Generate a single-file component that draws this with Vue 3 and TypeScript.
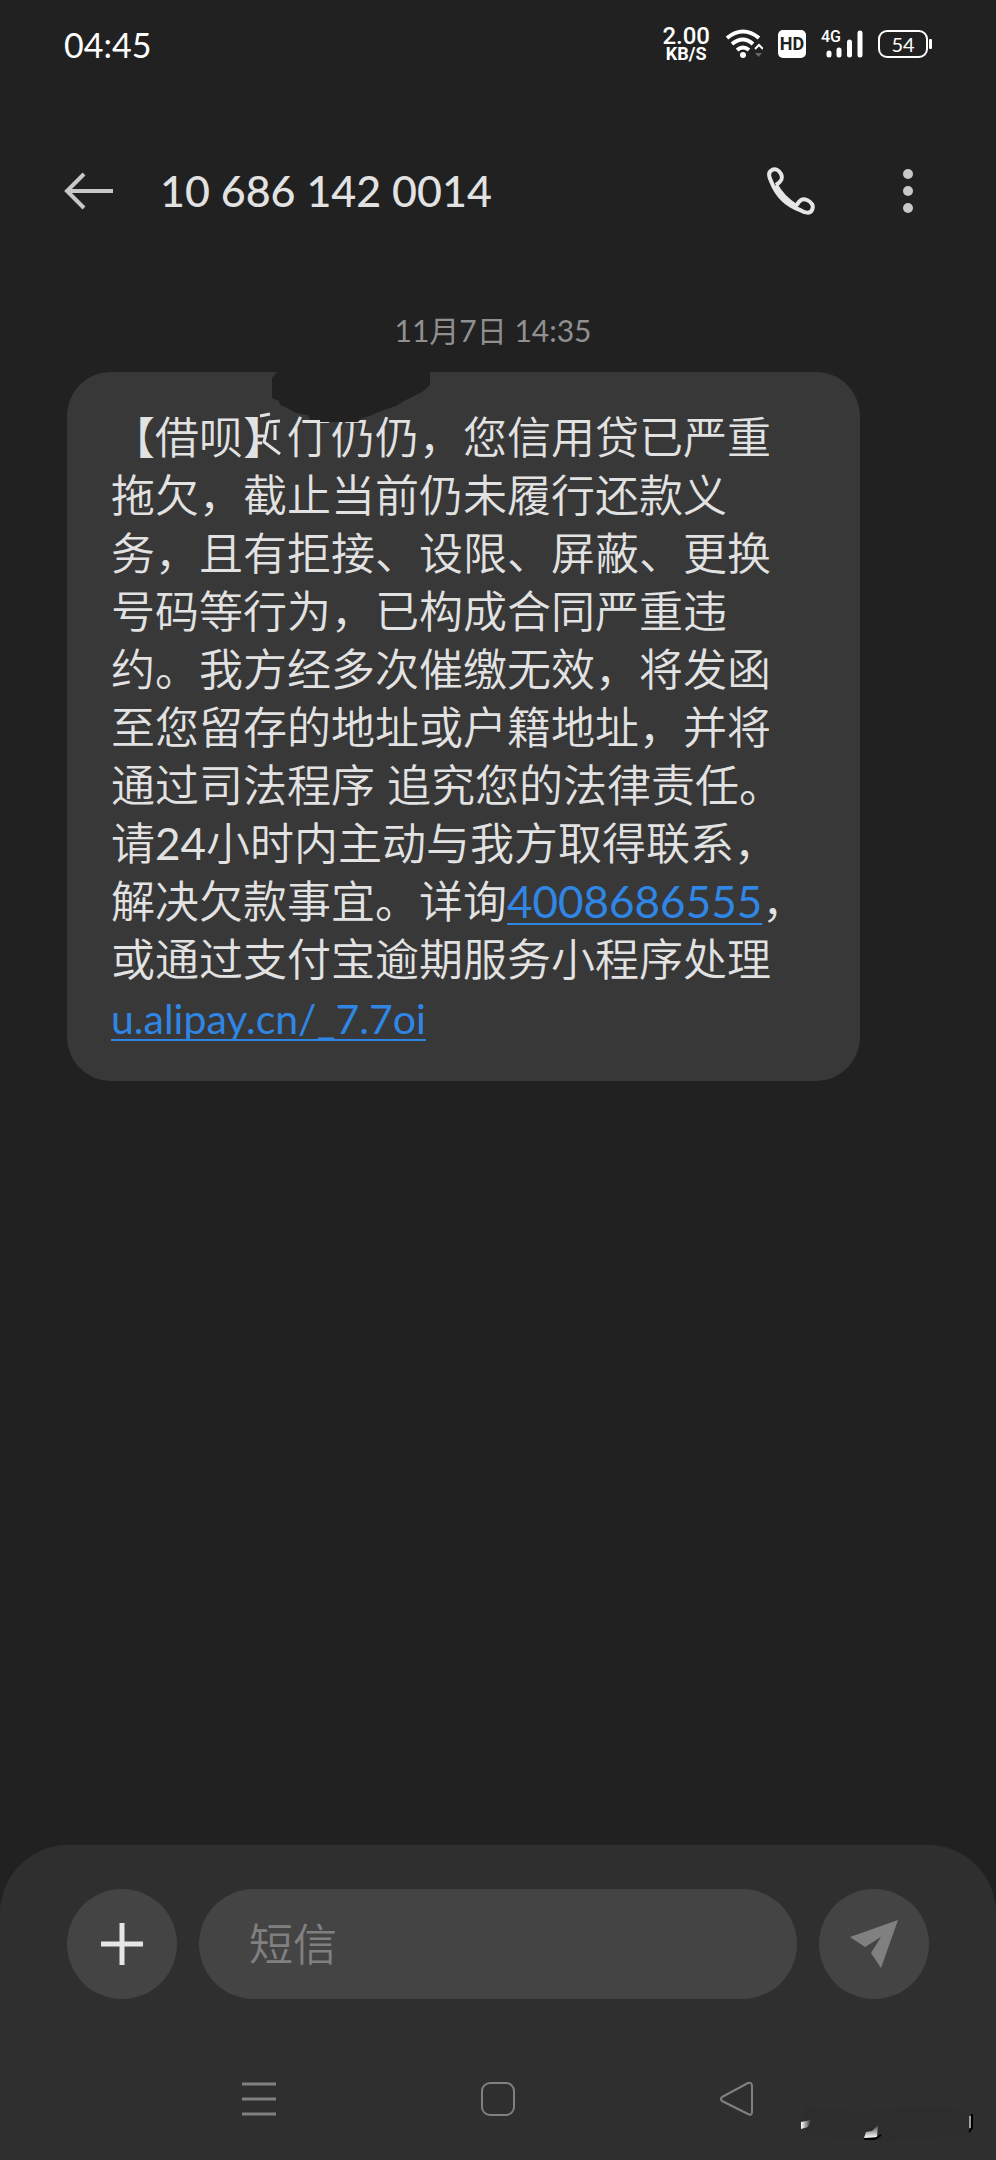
<script setup lang="ts">
import { ref } from 'vue'

const draft = ref('')
const time = '04:45'
const sender = '10 686 142 0014'
</script>

<template>
  <div class="screen">
    <div class="status">
      <span class="clock">{{ time }}</span>
      <div class="indicators">
        <div class="speed"><b>2.00</b><span>KB/S</span></div>
        <svg width="38" height="30" viewBox="0 0 38 30" fill="none" stroke="#fff">
          <path d="M2 9Q18 -4 34 9" stroke-width="4" />
          <path d="M7 15Q18 6 28 15" stroke-width="4" />
          <path d="M12 21Q18 16 24 21" stroke-width="4" />
          <circle cx="18" cy="26" r="3" fill="#fff" stroke="none" />
          <path d="M30 20l4-4 4 4" stroke-width="2" />
          <path d="M30 24h7l-3.500 4z" fill="#666" stroke="none" />
        </svg>
        <span class="hd">HD</span>
        <div class="signal">
          <span>4G</span>
          <svg width="42" height="30" viewBox="0 0 42 30" stroke="#fff" stroke-width="5" stroke-linecap="round">
            <path d="M8 24v2M18 21v5M28.500 13v13M39 4v22" />
          </svg>
        </div>
        <div class="battery">54</div>
      </div>
    </div>

    <header class="bar">
      <button class="icon" aria-label="返回">
        <svg width="50" height="38" viewBox="0 0 50 38" fill="none" stroke="#c8c8c8" stroke-width="4">
          <path d="M49 19H3M20 2L3 19L20 36" />
        </svg>
      </button>
      <h1>{{ sender }}</h1>
      <button class="icon call" aria-label="拨打电话">
        <svg width="50" height="50" viewBox="0 0 50 50" fill="none" stroke="#e6e6e6" stroke-width="4" stroke-linejoin="round">
          <path d="M10 19C16 15 17 12 15 8C13 4 9 2 6 4C2 6 3 11 5 15C10 28 20 39 34 44C39 47 44 48 46 44C48 40 46 36 41 34C36 32 34 34 30 40M10 19C14 27 21 34 30 40" />
        </svg>
      </button>
      <button class="icon" aria-label="更多">
        <svg width="12" height="46" viewBox="0 0 12 46" fill="#c8c8c8">
          <circle cx="6" cy="6" r="5" /><circle cx="6" cy="23" r="5" /><circle cx="6" cy="40" r="5" />
        </svg>
      </button>
    </header>

    <main class="thread">
      <time class="stamp">11月7日 14:35</time>
      <article class="bubble">
        <svg class="notch" width="192" height="102" viewBox="0 0 192 102" fill="none">
          <path d="M37 0L32 6V26L39 29L40 33L47 36L54 40L60 42L68 43L70 48H80V50H118L122 46L130 44L136 41L144 38L156 34L164 29L172 25L182 20L190 13V0Z" fill="#212121" />
          <path d="M20 44L30 42M28 50L40 49M28 50L26 62L24 70L40 82M35 53V68M16 64H26M17 71H22" stroke="#e2e2e2" stroke-width="3" />
        </svg>
        <p>
          【借呗】<span>仃仍仍</span>，您信用贷已严重拖欠，截止当前仍未履行还款义务，且有拒接、设限、屏蔽、更换号码等行为，已构成合同严重违约。我方经多次催缴无效，将发函至您留存的地址或户籍地址，并将通过司法程序 追究您的法律责任。请<span class="digits">24</span>小时内主动与我方取得联系，解决欠款事宜。详询<a href="tel:4008686555">4008686555</a>，或通过支付宝逾期服务小程序处理 <a class="url" href="#link">u.alipay.cn/_7.7oi</a>
        </p>
      </article>
    </main>

    <footer class="dock">
      <form class="composer" @submit.prevent>
        <button type="button" class="round" aria-label="添加">
          <svg width="42" height="42" viewBox="0 0 42 42" stroke="#e6e6e6" stroke-width="5"><path d="M21 0v42M0 21h42" /></svg>
        </button>
        <input v-model="draft" type="text" placeholder="短信" aria-label="短信" />
        <button type="submit" class="round" aria-label="发送">
          <svg width="48" height="48" viewBox="0 0 48 48" fill="#808080"><path d="M48 0L0 17L15 27L31 17L21 33L31 48Z" /></svg>
        </button>
      </form>
      <nav class="keys">
        <button class="icon" aria-label="最近任务">
          <svg width="36" height="36" viewBox="0 0 36 36" stroke="#808080" stroke-width="3"><path d="M1 3h34M1 18h34M1 33h34" /></svg>
        </button>
        <button class="icon" aria-label="主屏幕">
          <svg width="36" height="36" viewBox="0 0 36 36" fill="none" stroke="#808080" stroke-width="2"><rect x="2" y="2" width="32" height="32" rx="8" /></svg>
        </button>
        <button class="icon" aria-label="后退">
          <svg width="36" height="36" viewBox="0 0 36 36" fill="none" stroke="#808080" stroke-width="2" stroke-linejoin="round"><path d="M3 16L29 2Q33 1 33 5V31Q33 35 29 33L3 20Q1 18 3 16Z" /></svg>
        </button>
      </nav>
      <svg class="smear" width="176" height="40" viewBox="0 0 176 40" aria-hidden="true">
        <defs>
          <linearGradient id="glintA"><stop offset="0" stop-color="#fff" /><stop offset="1" stop-color="#333" /></linearGradient>
          <linearGradient id="glintB" x1="0" y1="1" x2="0" y2="0"><stop offset="0" stop-color="#fff" /><stop offset="1" stop-color="#444" /></linearGradient>
        </defs>
        <path d="M4 4L60 8L130 2L168 8L170 30L120 34L84 36L40 34L6 30Z" fill="#2d2d2d" />
        <path d="M1 18L11 16L8 23L1 25Z" fill="url(#glintA)" />
        <path d="M64 34L66 28L72 27L78 21L77 33Z" fill="url(#glintB)" />
        <path d="M64 35H75L81 31" stroke="#000" stroke-width="2" fill="none" />
        <path d="M170 12V24" stroke="#a0a0a0" stroke-width="2" />
        <path d="M172 10V24L169 28" stroke="#000" stroke-width="2" fill="none" />
      </svg>
    </footer>
  </div>
</template>

<style>
body { margin: 0; background: #212121; }
</style>

<style scoped>
.screen {
  min-height: 100vh;
  display: flex;
  flex-direction: column;
  background: #212121;
  color: #e2e2e2;
  font-family: Lato, "Noto Sans CJK SC", sans-serif;
}
button { border: 0; padding: 0; background: none; display: flex; align-items: center; justify-content: center; }
svg { display: block; }
.status { height: 88px; box-sizing: border-box; padding: 0 68px 0 64px; display: flex; align-items: center; justify-content: space-between; color: #fff; }
.clock { font-size: 34px; }
.indicators { display: flex; align-items: center; gap: 15px; }
.speed { display: flex; flex-direction: column; align-items: center; font-family: Roboto, sans-serif; font-weight: 700; font-size: 18px; line-height: 16px; }
.speed b { font-size: 24px; line-height: 20px; font-weight: 500; }
.hd { width: 28px; height: 28px; border-radius: 5px; background: #fff; color: #212121; font: 700 18px/28px Roboto, sans-serif; text-align: center; }
.signal { position: relative; }
.signal span { position: absolute; left: 0; top: 0; font: 500 16px/16px Roboto, sans-serif; }
.battery { position: relative; width: 46px; height: 24px; border: 2px solid #fff; border-radius: 9px; font-size: 20px; line-height: 24px; text-align: center; }
.battery::after { content: ""; position: absolute; right: -6px; top: 7px; width: 3px; height: 10px; background: #fff; border-radius: 1px; }
.bar { height: 206px; box-sizing: border-box; padding: 0 82px 0 64px; display: flex; align-items: center; }
h1 { flex: 1; margin: 0 0 0 46px; font-size: 43px; font-weight: 500; line-height: 56px; }
.call { margin-right: 86px; }
.thread { flex: 1; display: flex; flex-direction: column; padding-top: 12px; }
.stamp { padding-right: 10px; text-align: center; font-size: 30px; line-height: 48px; color: #909090; }
.bubble { position: relative; margin: 18px 136px 0 67px; padding: 36px 48px 33px 44px; border-radius: 44px; background: #383838; }
.notch { position: absolute; left: 173px; top: 0; }
p { margin: 0; font-size: 44px; line-height: 58px; font-weight: 350; }
.digits { font-weight: 400; }
a { color: #2f86e4; font-weight: 400; text-decoration-thickness: 2px; text-underline-offset: 5px; text-decoration-skip-ink: none; }
.url { font-size: 41px; }
.dock { position: relative; background: #2f2f2f; border-radius: 68px 68px 0 0; padding: 44px 67px 43px; }
.composer { display: flex; gap: 22px; }
.round { flex: none; width: 110px; height: 110px; border-radius: 50%; background: #444; }
input { flex: 1; min-width: 0; height: 110px; box-sizing: border-box; border: 0; outline: 0; border-radius: 55px; padding: 0 50px; background: #444; color: #e2e2e2; font: inherit; font-size: 44px; font-weight: 350; }
input::placeholder { color: #808080; opacity: 1; }
.keys { margin-top: 82px; padding: 0 174px; display: flex; justify-content: space-between; }
.smear { position: absolute; right: 20px; bottom: 16px; }
</style>
